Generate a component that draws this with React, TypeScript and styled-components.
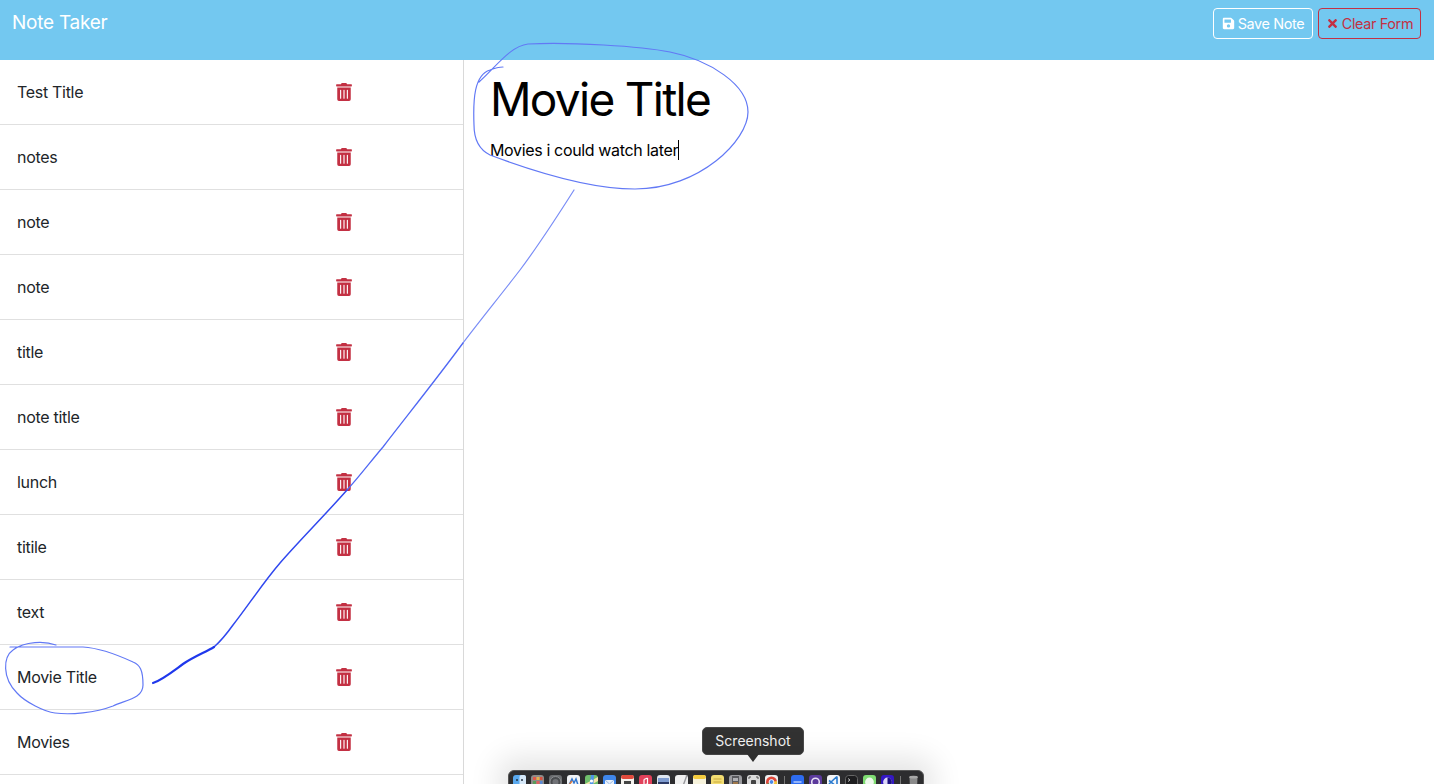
import React from "react";
import styled, { createGlobalStyle } from "styled-components";
import { FaSave, FaTimes, FaTrashAlt } from "react-icons/fa";

const Global = createGlobalStyle`
  html, body { margin: 0; padding: 0; background: #fff; overflow: hidden; }
  body { font-family: Inter, "Liberation Sans", sans-serif; }
`;

const Page = styled.div`
  position: relative;
  width: 1434px;
  height: 784px;
  overflow: hidden;
`;

const Header = styled.header`
  display: flex;
  justify-content: space-between;
  align-items: flex-start;
  height: 60px;
  padding: 8px 13px 0 12px;
  box-sizing: border-box;
  background: #73c8f0;
`;

const Brand = styled.div`
  font-size: 19px;
  line-height: 28px;
  letter-spacing: -0.25px;
  padding-top: 1px;
  color: #fff;
`;

const Actions = styled.div`
  display: flex;
  gap: 5px;
`;

const ActionButton = styled.button<{ $tone: string; $width: number }>`
  display: flex;
  align-items: center;
  justify-content: center;
  gap: 3px;
  width: ${(p) => p.$width}px;
  height: 31px;
  padding: 0;
  border: 1px solid ${(p) => p.$tone};
  border-radius: 4px;
  background: transparent;
  color: ${(p) => p.$tone};
  font-family: inherit;
  font-size: 14.4px;
  letter-spacing: -0.35px;
  svg { width: 13px; height: 13px; }
`;

const Main = styled.main`
  display: flex;
  height: 724px;
`;

const Sidebar = styled.aside`
  width: 464px;
  flex: none;
  box-sizing: border-box;
  border-right: 1px solid #d9d9d9;
`;

const Row = styled.div`
  display: flex;
  align-items: center;
  height: 65px;
  box-sizing: border-box;
  padding: 0 0 1px 17px;
  border-bottom: 1px solid #e0e0e0;
`;

const RowTitle = styled.span`
  flex: 0 0 319px;
  font-size: 16px;
  letter-spacing: -0.3px;
  color: #212529;
`;

const Trash = styled(FaTrashAlt)`
  width: 16px;
  height: 18px;
  color: #c33043;
`;

const Editor = styled.section`
  flex: 1;
  padding: 10px 26px;
  color: #000;
`;

const NoteTitle = styled.h1`
  margin: 0;
  font-size: 46px;
  font-weight: 400;
  line-height: 58px;
  letter-spacing: -1.7px;
`;

const NoteBody = styled.p`
  display: flex;
  align-items: center;
  margin: 10px 0 0;
  font-size: 16px;
  line-height: 24px;
  letter-spacing: -0.35px;
`;

const Caret = styled.span`
  width: 1px;
  height: 20px;
  background: #000;
`;

const Scribble = styled.svg`
  position: absolute;
  inset: 0;
  width: 1434px;
  height: 784px;
  pointer-events: none;
  fill: none;
  stroke-linecap: round;
  stroke-linejoin: round;
`;

const Dock = styled.div`
  position: absolute;
  left: 508px;
  top: 770px;
  display: flex;
  align-items: flex-start;
  width: 416px;
  height: 30px;
  box-sizing: border-box;
  padding: 4px 0 0 4px;
  border-radius: 6px;
  border: 1px solid #555;
  background: #2d2d2f;
  box-shadow: 0 -2px 30px 10px rgba(0, 0, 0, 0.11);
`;

const DockGlyph = styled.svg`
  flex: none;
  width: 13px;
  height: 14px;
  margin-right: 5px;
`;

const DockDivider = styled.span`
  flex: none;
  width: 1px;
  height: 10px;
  margin: 1px 6px 0 1px;
  background: #777;
`;

const Tooltip = styled.div`
  position: absolute;
  left: 702px;
  top: 727px;
  width: 102px;
  height: 28px;
  box-sizing: border-box;
  border: 1px solid #4a4a4a;
  border-radius: 5px;
  background: #323232;
  color: #f2f2f2;
  font-size: 14px;
  line-height: 26px;
  text-align: center;
  &::after {
    content: "";
    position: absolute;
    left: 44px;
    top: 26px;
    border-left: 6px solid transparent;
    border-right: 6px solid transparent;
    border-top: 8px solid #323232;
  }
`;

const notes = ["Test Title", "notes", "note", "note", "title", "note title", "lunch", "titile", "text", "Movie Title", "Movies"];

const Tile = ({ c }: { c: string }) => <rect width="13" height="14" rx="3" fill={c} />;

const dockFirst: React.ReactNode[] = [
  <><Tile c="#5aa9ee" /><rect x="6.5" width="6.5" height="14" rx="2" fill="#d6e8f8" /><circle cx="4" cy="5" r="1" fill="#234" /><circle cx="9" cy="5" r="1" fill="#234" /></>,
  <><Tile c="#8f8a88" /><rect x="2" y="2" width="3" height="3" fill="#e0584a" /><rect x="5.5" y="2" width="3" height="3" fill="#e8b04a" /><rect x="9" y="2" width="2.5" height="3" fill="#d8503f" /><rect x="2" y="6" width="3" height="3" fill="#5a9c5a" /><rect x="5.5" y="6" width="3" height="3" fill="#e06060" /><rect x="9" y="6" width="2.5" height="3" fill="#5a8ad8" /></>,
  <><Tile c="#6b6d70" /><circle cx="6.5" cy="7" r="5.5" fill="#4a4c4f" stroke="#8a8c8f" /><circle cx="6.5" cy="7" r="3" fill="#707276" /></>,
  <><Tile c="#f2f4f6" /><path d="M2 10 L5 4 L7 8 L9 4 L11 10" stroke="#3478d0" strokeWidth="1.5" fill="none" /><path d="M2 10 L5 6" stroke="#e07a3a" strokeWidth="1.5" /></>,
  <><Tile c="#70bf6c" /><path d="M0 9 L13 2 V6 L0 13 Z" fill="#f4e4a8" /><path d="M6 0 H9 L8 14 H4 Z" fill="#4f94e8" /><circle cx="6.5" cy="6" r="1.6" fill="#fff" /></>,
  <><Tile c="#3f86ea" /><path d="M2 5 H11 V12 H2 Z" fill="#e8f0fb" /><path d="M2 5 L6.5 9 L11 5" stroke="#9ab8e0" fill="none" /></>,
  <><Tile c="#f4f2ee" /><rect width="13" height="4" rx="2" fill="#e04a3c" /><rect x="3" y="6" width="7" height="5" fill="#444" /></>,
  <><Tile c="#e2405a" /><path d="M8.5 3 V9.5 M5 4.5 V10.5 M5 4.5 L8.5 3" stroke="#fff" strokeWidth="1.2" fill="none" /><circle cx="7.4" cy="9.6" r="1.2" fill="#fff" /><circle cx="3.9" cy="10.6" r="1.2" fill="#fff" /></>,
  <><Tile c="#dfe6f0" /><rect x="1" y="3" width="11" height="8" fill="#7f9cd0" /><rect x="1" y="7" width="11" height="4" fill="#2c3a66" /></>,
  <><Tile c="#f0f0f0" /><path d="M8 11 L12 0" stroke="#9a9a9e" strokeWidth="1.4" /></>,
  <><Tile c="#f7f3dc" /><rect width="13" height="4" rx="2" fill="#f5cc3e" /></>,
  <><Tile c="#f3dd72" /><path d="M2.5 4 H10.5 M2.5 7 H10.5 M2.5 10 H10.5" stroke="#c9a93a" /></>,
  <><Tile c="#9b9b9f" /><rect x="3" y="1" width="7" height="13" fill="#5a5a5e" /><rect x="4" y="3" width="5" height="3" fill="#b0b0b4" /><rect x="4" y="7" width="5" height="3" fill="#a0784a" /></>,
  <><Tile c="#dcdcdc" /><path d="M2 4 V2 H4 M9 2 H11 V4" stroke="#555" fill="none" /><rect x="4" y="5" width="5" height="5" rx="1" fill="#444" /></>,
  <><Tile c="#eceff1" /><circle cx="6.5" cy="7" r="5.5" fill="#e0493c" /><path d="M1.5 9 A5.5 5.5 0 0 0 9 12 L7 7 Z" fill="#4ca856" /><path d="M6.5 7 L12 6 A5.5 5.5 0 0 1 9 12 Z" fill="#f4c63c" /><circle cx="6.5" cy="7" r="2.4" fill="#4a88e8" stroke="#fff" /></>,
];

const dockSecond: React.ReactNode[] = [
  <><Tile c="#2e6cf0" /><path d="M2.5 7 H10.5" stroke="#bcd2fb" strokeWidth="1.4" /></>,
  <><Tile c="#5c3a9c" /><circle cx="6.5" cy="7" r="3.8" fill="none" stroke="#e6dff3" strokeWidth="1.6" /></>,
  <><Tile c="#f4f6f9" /><path d="M10 1.5 L4 7 L2 5.5 M10 1.5 V12 L4 7 M4 7 L2 9" stroke="#2a7bd0" strokeWidth="1.6" fill="none" /></>,
  <><Tile c="#1d1d1f" /><rect x=".5" y=".5" width="12" height="13" rx="3" stroke="#666" fill="none" /><path d="M3 3.5 L5 5 L3 6.5" stroke="#bbb" fill="none" /></>,
  <><Tile c="#7fdc72" /><circle cx="6.5" cy="7" r="4.4" fill="#eef8ec" /></>,
  <><Tile c="#3418c4" /><circle cx="6.5" cy="7" r="4.4" fill="#dcd8f6" /><path d="M6.5 2.6 A4.4 4.4 0 0 1 6.5 11.4 Z" fill="#1c1080" /></>,
];

const bin = (
  <>
    <path d="M2.5 2 H10.5 L10 14 H3 Z" fill="#8a8a8a" />
    <ellipse cx="6.5" cy="2.2" rx="4.4" ry="1.4" fill="#a8a8a8" />
  </>
);

export default function App() {
  return (
    <Page>
      <Global />
      <Header>
        <Brand>Note Taker</Brand>
        <Actions>
          <ActionButton $tone="#ffffff" $width={100}><FaSave /> Save Note</ActionButton>
          <ActionButton $tone="#c33043" $width={103}><FaTimes /> Clear Form</ActionButton>
        </Actions>
      </Header>
      <Main>
        <Sidebar>
          {notes.map((n, i) => (
            <Row key={i}>
              <RowTitle>{n}</RowTitle>
              <Trash />
            </Row>
          ))}
        </Sidebar>
        <Editor>
          <NoteTitle>Movie Title</NoteTitle>
          <NoteBody>Movies i could watch later<Caret /></NoteBody>
        </Editor>
      </Main>
      <Scribble viewBox="0 0 1434 784">
        <path stroke="#6279f5" strokeWidth="1.2" d="M479 82 C 495 68, 510 46, 528 44 C 570 42, 640 46, 670 52 C 710 60, 748 85, 748 112 C 748 140, 700 189, 635 189 C 590 189, 530 170, 490 155 C 480 150, 474 140, 474 125 C 473 100, 474 75, 490 70 C 495 68, 500 67, 503 67" />
        <path stroke="#6279f5" strokeWidth="1.2" d="M56 645 C 45 641, 25 641, 13 650 C 3 657, 2 678, 17 693 C 25 702, 45 712, 55 713 C 70 715, 95 713, 113 706 C 125 700, 143 699, 143 685 C 143 670, 140 665, 133 662 C 120 656, 100 648, 83 647 L 10 647" />
        <path stroke="#7a8df6" strokeWidth="1.2" d="M574 190 C 555 220, 538 246, 520 270 C 500 296, 482 318, 463 343" />
        <path stroke="#5068f4" strokeWidth="1.3" d="M463 343 C 438 377, 410 412, 383 447 C 371 461, 359 477, 347 490" />
        <path stroke="#3048ef" strokeWidth="1.5" d="M347 490 C 325 515, 300 540, 280 563 C 262 584, 248 606, 233 625 C 228 632, 222 640, 214 647" />
        <path stroke="#1f38ec" strokeWidth="2.2" d="M214 647 C 206 652, 195 656, 183 664 C 172 672, 162 680, 153 683" />
      </Scribble>
      <Tooltip>Screenshot</Tooltip>
      <Dock>
        {dockFirst.map((g, i) => <DockGlyph key={i} viewBox="0 0 13 14">{g}</DockGlyph>)}
        <DockDivider />
        {dockSecond.map((g, i) => <DockGlyph key={i} viewBox="0 0 13 14">{g}</DockGlyph>)}
        <DockDivider />
        <DockGlyph viewBox="0 0 13 14">{bin}</DockGlyph>
      </Dock>
    </Page>
  );
}
